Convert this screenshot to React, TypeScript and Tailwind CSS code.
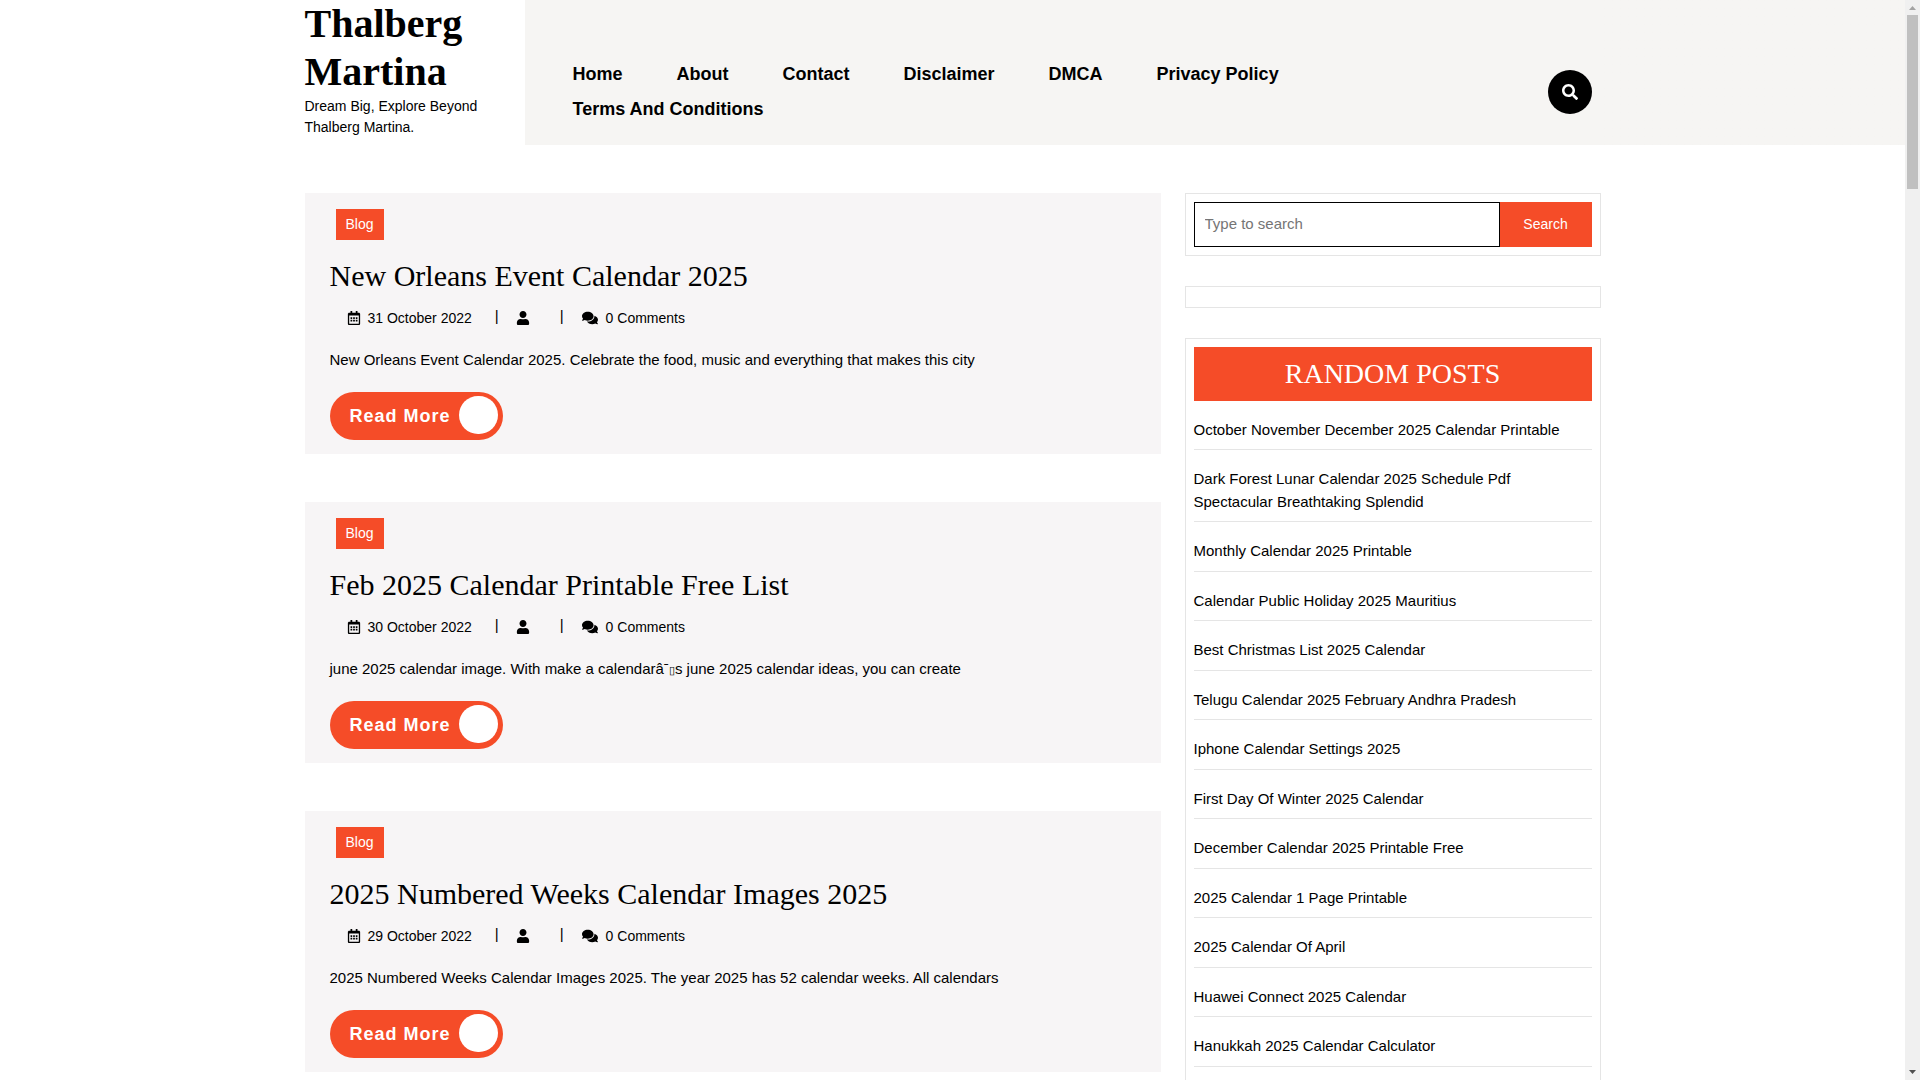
import React from 'react';
import { FaRegCalendarAlt, FaUser, FaComments, FaSearch } from 'react-icons/fa';

const navLinks = ['Home', 'About', 'Contact', 'Disclaimer', 'DMCA', 'Privacy Policy', 'Terms And Conditions'];

const posts = [
  {
    title: 'New Orleans Event Calendar 2025',
    date: '31 October 2022',
    excerpt: 'New Orleans Event Calendar 2025. Celebrate the food, music and everything that makes this city',
  },
  {
    title: 'Feb 2025 Calendar Printable Free List',
    date: '30 October 2022',
    excerpt: (
      <>
        june 2025 calendar image. With make a calendarâˉ<span className="text-[11px] leading-none">▯</span>s june 2025
        calendar ideas, you can create
      </>
    ),
  },
  {
    title: '2025 Numbered Weeks Calendar Images 2025',
    date: '29 October 2022',
    excerpt: '2025 Numbered Weeks Calendar Images 2025. The year 2025 has 52 calendar weeks. All calendars',
  },
];

const randomPosts = [
  'October November December 2025 Calendar Printable',
  'Dark Forest Lunar Calendar 2025 Schedule Pdf Spectacular Breathtaking Splendid',
  'Monthly Calendar 2025 Printable',
  'Calendar Public Holiday 2025 Mauritius',
  'Best Christmas List 2025 Calendar',
  'Telugu Calendar 2025 February Andhra Pradesh',
  'Iphone Calendar Settings 2025',
  'First Day Of Winter 2025 Calendar',
  'December Calendar 2025 Printable Free',
  '2025 Calendar 1 Page Printable',
  '2025 Calendar Of April',
  'Huawei Connect 2025 Calendar',
  'Hanukkah 2025 Calendar Calculator',
  '',
];

function Header() {
  return (
    <header className="bg-linear-to-r from-white from-50% to-[#f6f5f3] to-50%">
      <div className="mx-auto flex max-w-[1296px]">
        <div className="w-[220px] shrink-0 bg-white pb-[7px]">
          <h1 className="font-['Liberation_Serif',serif] text-[40px] leading-[48px] font-bold">
            <a href="#">Thalberg Martina</a>
          </h1>
          <p className="text-sm leading-[21px]">Dream Big, Explore Beyond Thalberg Martina.</p>
        </div>
        <div className="flex grow items-center justify-between bg-[#f6f5f3] pt-[38px] pr-[9px] pl-12">
          <nav className="flex flex-wrap text-lg leading-[35px] font-bold">
            {navLinks.map((link) => (
              <a key={link} href="#" className="pr-[54px]">{link}</a>
            ))}
          </nav>
          <button
            type="button"
            aria-label="Open search"
            className="flex size-11 shrink-0 items-center justify-center rounded-full bg-black text-white"
          >
            <FaSearch size={16} />
          </button>
        </div>
      </div>
    </header>
  );
}

function PostCard({ post }: { post: (typeof posts)[number] }) {
  return (
    <article className="bg-[#f7f5f6] px-[25px] pt-4 pb-[14px]">
      <a href="#" className="ml-[6px] inline-block bg-[#f54c28] px-[10px] py-[5px] align-top text-sm leading-[21px] text-white">
        Blog
      </a>
      <h2 className="mt-[18px] font-['Liberation_Serif',serif] text-3xl leading-9">
        <a href="#">{post.title}</a>
      </h2>
      <div className="mt-[14px] flex items-start pl-[17px] text-sm leading-[21px]">
        <span className="flex gap-[7px]">
          <FaRegCalendarAlt size={14} className="mt-[3px]" />
          {post.date}
        </span>
        <span className="ml-[23px] text-[15px] leading-[15px]">|</span>
        <FaUser size={14} className="mt-[3px] ml-[17px]" />
        <span className="ml-[30px] text-[15px] leading-[15px]">|</span>
        <span className="ml-[18px] flex gap-2">
          <FaComments size={16} className="mt-[2px]" />
          0 Comments
        </span>
      </div>
      <p className="mt-[19px] text-[15px] leading-[23px]">{post.excerpt}</p>
      <a
        href="#"
        className="mt-[21px] inline-flex h-12 items-start rounded-full bg-[#f54c28] pr-[5px] pl-5 align-top text-lg leading-[48px] font-bold tracking-[1px] text-white"
      >
        Read More
        <span className="mt-1 ml-2 h-[38px] w-[39px] rounded-full bg-white" />
      </a>
    </article>
  );
}

function Sidebar() {
  return (
    <aside className="w-[416px] shrink-0 space-y-[30px]">
      <form className="flex border border-[#e5e5e5] p-2">
        <input
          type="search"
          aria-label="Search for"
          placeholder="Type to search"
          className="h-[45px] min-w-0 grow border border-black px-[10px] pb-[2px] text-[15px] placeholder:text-[#757575]"
        />
        <button type="button" className="w-[92px] bg-[#f54c28] pb-[2px] text-sm text-white">
          Search
        </button>
      </form>
      <div className="h-[22px] border border-[#e5e5e5]" />
      <section className="border border-[#e5e5e5] p-2">
        <h3 className="bg-[#f54c28] py-[10px] text-center font-['Liberation_Serif',serif] text-[28px] leading-[1.2] text-white">
          RANDOM POSTS
        </h3>
        <ul>
          {randomPosts.map((title, index) => (
            <li key={index} className="border-b border-[#e5e5e5] pt-[18px] pb-2 text-[15px] leading-normal">
              <a href="#">{title}</a>
            </li>
          ))}
        </ul>
      </section>
    </aside>
  );
}

function Scrollbar() {
  return (
    <div className="flex w-[15px] shrink-0 flex-col items-center bg-[#f0f0f0]">
      <svg width="15" height="15" viewBox="0 0 15 15" fill="#a3a3a3">
        <path d="M4 10h7L7.5 6z" />
      </svg>
      <div className="h-[174px] w-[11px] bg-[#c0c0c0]" />
      <svg className="mt-auto" width="15" height="15" viewBox="0 0 15 15" fill="#505050">
        <path d="M4 5h7L7.5 9z" />
      </svg>
    </div>
  );
}

export default function App() {
  return (
    <div className="flex h-screen bg-white font-['Liberation_Sans',Arial,sans-serif] text-black">
      <div className="min-w-0 grow overflow-hidden">
        <Header />
        <main className="mx-auto mt-12 flex max-w-[1296px] items-start gap-6">
          <div className="min-w-0 grow space-y-12">
            {posts.map((post) => (
              <PostCard key={post.title} post={post} />
            ))}
          </div>
          <Sidebar />
        </main>
      </div>
      <Scrollbar />
    </div>
  );
}
